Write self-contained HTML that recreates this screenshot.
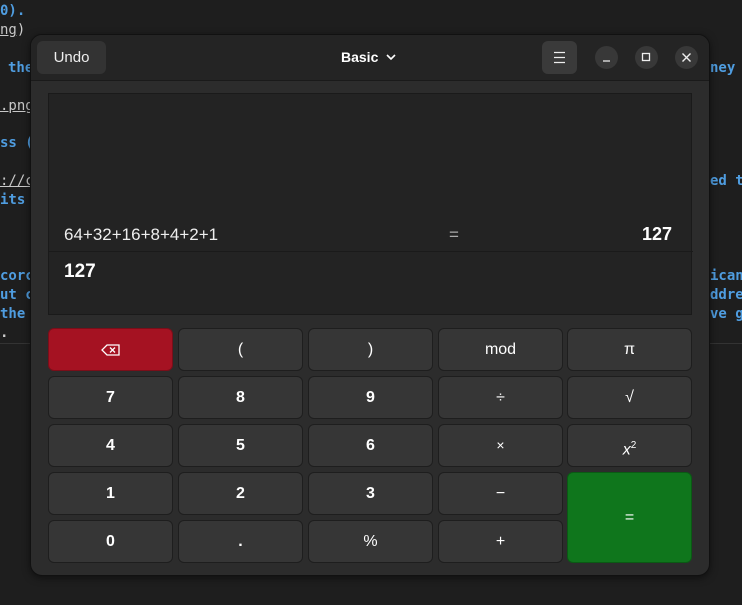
<!DOCTYPE html>
<html><head><meta charset="utf-8"><style>
*{margin:0;padding:0;box-sizing:border-box}
body{width:742px;height:605px;background:#1e1e1e;position:relative;overflow:hidden;font-family:"Liberation Sans","DejaVu Sans",sans-serif}
.bt{position:absolute;font:bold 14px "DejaVu Sans Mono","Liberation Mono",monospace;color:#4f9de0;white-space:pre}
.u{text-decoration:underline;color:#c8c8c8;font-weight:normal}
.w{position:absolute;left:30px;top:34px;width:680px;height:542px;background:#2c2c2c;border-radius:12px;border:1px solid #111;overflow:hidden;box-shadow:0 2px 8px rgba(0,0,0,.5)}
.hd{position:absolute;left:0;top:0;width:680px;height:46px;background:#242424;border-bottom:1px solid #1a1a1a}
.undo{position:absolute;left:6px;top:6px;width:69px;height:33px;background:#333;border-radius:6px;color:#eee;font-size:15px;text-align:center;line-height:33px}
.title{position:absolute;left:310px;top:14px;color:#fff;font-weight:bold;font-size:14px}
.menu{position:absolute;left:511px;top:6px;width:35px;height:33px;background:#3a3a3a;border-radius:6px}
.cb{position:absolute;top:11px;width:23px;height:23px;border-radius:50%;background:#383838}
.disp{position:absolute;left:17px;top:58px;width:644px;height:222px;background:#232323;border:1px solid #1a1a1a}
.b{position:absolute;width:125px;height:43px;background:#363636;border:1px solid #1e1e1e;border-radius:6px;color:#fff;font-size:16px;font-weight:bold;text-align:center;line-height:41px}
.n{font-weight:normal}
</style></head><body>
<div class="bt" style="left:0;top:3px">0).</div>
<div class="bt" style="left:0;top:22px"><span class="u">ng</span><span style="color:#ccc;font-weight:normal">)</span></div>
<div class="bt" style="left:8px;top:60px">the</div>
<div class="bt" style="left:0;top:98px"><span class="u">.png</span></div>
<div class="bt" style="left:0;top:135px">ss (</div>
<div class="bt" style="left:0;top:173px"><span class="u">://c</span></div>
<div class="bt" style="left:0;top:192px">its</div>
<div class="bt" style="left:0;top:268px">corc</div>
<div class="bt" style="left:0;top:287px">ut c</div>
<div class="bt" style="left:0;top:306px">the</div>
<div class="bt" style="left:0;top:325px;color:#ccc">.</div>
<div class="bt" style="left:710px;top:60px">ney p</div>
<div class="bt" style="left:710px;top:173px">ed th</div>
<div class="bt" style="left:710px;top:268px">icant</div>
<div class="bt" style="left:710px;top:287px">ddres</div>
<div class="bt" style="left:710px;top:306px">ve ge</div>
<div style="position:absolute;left:0;top:343px;width:742px;height:1px;background:#333"></div>
<div class="w">
 <div class="hd">
  <div class="undo">Undo</div>
  <div class="title">Basic <svg width="12" height="10" viewBox="0 0 12 10" style="margin-left:3px"><path d="M2 3l4 4 4-4" stroke="#fff" stroke-width="1.6" fill="none"/></svg></div>
  <div class="menu"><svg width="35" height="33"><path d="M12 11.5h11M12 16.5h11M12 21.5h11" stroke="#eee" stroke-width="1.2"/></svg></div>
  <div class="cb" style="left:564px"><svg width="23" height="23"><path d="M8 15h7" stroke="#eee" stroke-width="1.3"/></svg></div>
  <div class="cb" style="left:604px"><svg width="23" height="23"><rect x="7.5" y="7.5" width="7" height="7" stroke="#eee" stroke-width="1.3" fill="none"/></svg></div>
  <div class="cb" style="left:644px"><svg width="23" height="23"><path d="M7.5 7.5l8 8M15.5 7.5l-8 8" stroke="#eee" stroke-width="1.4"/></svg></div>
 </div>
 <div class="disp">
  <div style="position:absolute;left:15px;top:131px;color:#eee;font-size:17px">64+32+16+8+4+2+1</div>
  <div style="position:absolute;left:400px;top:131px;color:#aaa;font-size:17px">=</div>
  <div style="position:absolute;right:19px;top:130px;color:#fff;font-size:18px;font-weight:bold">127</div>
  <div style="position:absolute;left:0;top:157px;width:644px;height:1px;background:#1a1a1a"></div>
  <div style="position:absolute;left:15px;top:167px;color:#fff;font-size:19px;font-weight:bold">127</div>
 </div>
</div>
<div class="b" style="left:48px;top:328px;background:#a51222;border-color:#7a0e19"><svg width="20" height="14" viewBox="0 0 20 14" style="vertical-align:middle"><path d="M6 2h12v10H6L1 7z" stroke="#fff" stroke-width="1.3" fill="none"/><path d="M9 4.5l5 5M14 4.5l-5 5" stroke="#fff" stroke-width="1.3"/></svg></div>
<div class="b n" style="left:178px;top:328px">(</div>
<div class="b n" style="left:308px;top:328px">)</div>
<div class="b n" style="left:438px;top:328px">mod</div>
<div class="b n" style="left:567px;top:328px">π</div>
<div class="b" style="left:48px;top:376px">7</div>
<div class="b" style="left:178px;top:376px">8</div>
<div class="b" style="left:308px;top:376px">9</div>
<div class="b n" style="left:438px;top:376px">÷</div>
<div class="b n" style="left:567px;top:376px">√</div>
<div class="b" style="left:48px;top:424px">4</div>
<div class="b" style="left:178px;top:424px">5</div>
<div class="b" style="left:308px;top:424px">6</div>
<div class="b n" style="left:438px;top:424px;font-size:14px">×</div>
<div class="b n" style="left:567px;top:424px"><i>x</i><sup style="font-size:10px">2</sup></div>
<div class="b" style="left:48px;top:472px">1</div>
<div class="b" style="left:178px;top:472px">2</div>
<div class="b" style="left:308px;top:472px">3</div>
<div class="b n" style="left:438px;top:472px">−</div>
<div class="b n" style="left:567px;top:472px;height:91px;line-height:89px;background:#0f761c;border-color:#0a5a14">=</div>
<div class="b" style="left:48px;top:520px">0</div>
<div class="b" style="left:178px;top:520px">.</div>
<div class="b n" style="left:308px;top:520px">%</div>
<div class="b n" style="left:438px;top:520px">+</div>
</body></html>
